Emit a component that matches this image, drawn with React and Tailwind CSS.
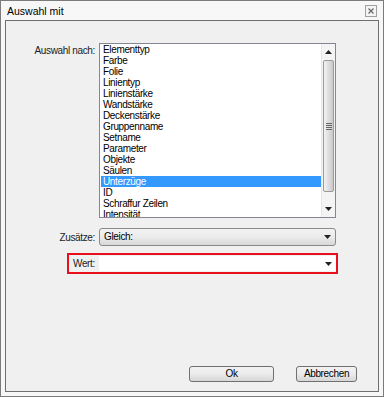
import React from 'react';

const items = [
  'Elementtyp',
  'Farbe',
  'Folie',
  'Linientyp',
  'Linienstärke',
  'Wandstärke',
  'Deckenstärke',
  'Gruppenname',
  'Setname',
  'Parameter',
  'Objekte',
  'Säulen',
  'Unterzüge',
  'ID',
  'Schraffur Zeilen',
  'Intensität',
];

// schmale Dialogschrift (kein Narrow-Font vorhanden)
const narrow = { fontFamily: '"Liberation Sans", Arial, sans-serif' };

function Arrow({ up }) {
  return (
    <svg width="7" height="4" viewBox="0 0 7 4">
      {up ? <path d="M0 4 L3.5 0 L7 4 Z" fill="#222" /> : <path d="M0 0 L7 0 L3.5 4 Z" fill="#222" />}
    </svg>
  );
}

function Scrollbar() {
  return (
    <div className="w-[14px] h-full flex flex-col bg-[#f4f4f4] border-l border-[#e6e6e6]">
      <div className="h-[16px] flex items-center justify-center">
        <Arrow up />
      </div>
      <div className="mx-[1px] h-[132px] rounded-[2px] border border-[#9a9a9a] bg-gradient-to-r from-[#f2f2f2] via-[#dedede] to-[#c9c9c9] flex items-center justify-center">
        <div className="flex flex-col gap-[1px]">
          <div className="w-[6px] h-[1px] bg-[#666]" />
          <div className="w-[6px] h-[1px] bg-[#666]" />
          <div className="w-[6px] h-[1px] bg-[#666]" />
          <div className="w-[6px] h-[1px] bg-[#666]" />
        </div>
      </div>
      <div className="flex-1" />
      <div className="h-[16px] flex items-center justify-center">
        <Arrow />
      </div>
    </div>
  );
}

function Button({ label, width }) {
  return (
    <button
      className={`${width} h-[16px] rounded-[3px] border border-[#707070] bg-gradient-to-b from-[#f2f2f2] via-[#ebebeb] to-[#d6d6d6] text-[10px] tracking-[-0.35px] leading-none text-black`}
      style={narrow}
    >
      {label}
    </button>
  );
}

export default function App() {
  return (
    <div className="w-[384px] h-[397px] bg-[#f7f7f7] border border-[#7b7b7b] flex flex-col" style={narrow}>
      {/* Titelleiste */}
      <div className="h-[19px] flex items-start justify-between pl-[6px] pr-[6px]">
        <span className="text-[10.5px] leading-none mt-[5px] text-black">Auswahl mit</span>
        <div className="w-[12px] h-[12px] mt-[4px] border border-[#a0a0a0] bg-[#f4f4f4] flex items-center justify-center">
          <svg width="6" height="6" viewBox="0 0 6 6">
            <path d="M0.5 0.5 L5.5 5.5 M5.5 0.5 L0.5 5.5" stroke="#666" strokeWidth="1.2" />
          </svg>
        </div>
      </div>

      {/* Dialogfläche */}
      <div className="flex-1 mx-[4px] mb-[4px] border border-[#6e6e6e] bg-[#f0f0f0] flex flex-col text-[10px] tracking-[-0.35px] text-black">
        <div className="flex mt-[22px]">
          <div className="w-[89px] text-right pt-[2px] leading-[11px] text-[#222]">Auswahl nach:</div>
          <div className="ml-[4px] w-[237px] h-[175px] border border-[#828790] bg-white flex">
            <div className="flex-1 overflow-hidden pl-[1px]">
              {items.map((it) => (
                <div
                  key={it}
                  className={`h-[11px] leading-[11px] pl-[2px] whitespace-nowrap ${
                    it === 'Unterzüge' ? 'bg-[#3399ff] text-white' : 'text-black'
                  }`}
                >
                  {it}
                </div>
              ))}
            </div>
            <Scrollbar />
          </div>
        </div>

        <div className="flex items-center mt-[10px]">
          <div className="w-[89px] text-right leading-[11px] text-[#222]">Zusätze:</div>
          <div className="ml-[4px] w-[237px] h-[18px] rounded-[3px] border border-[#8a8a8a] bg-gradient-to-b from-[#f3f3f3] via-[#ebebeb] to-[#d8d8d8] flex items-center justify-between pl-[4px] pr-[4px]">
            <span className="leading-none">Gleich:</span>
            <Arrow />
          </div>
        </div>

        <div className="ml-[61px] mt-[7px] w-[271px] h-[21px] border-2 border-[#e8101c] flex">
          <div className="w-[30px] pl-[4px] flex items-center leading-none text-[#222]">Wert:</div>
          <div className="flex-1 my-[1px] bg-white flex items-center justify-end pr-[4px]">
            <Arrow />
          </div>
        </div>

        <div className="flex-1" />

        <div className="flex mb-[9px] ml-[183px]">
          <Button label="Ok" width="w-[85px]" />
          <div className="w-[22px]" />
          <Button label="Abbrechen" width="w-[61px]" />
        </div>
      </div>
    </div>
  );
}
